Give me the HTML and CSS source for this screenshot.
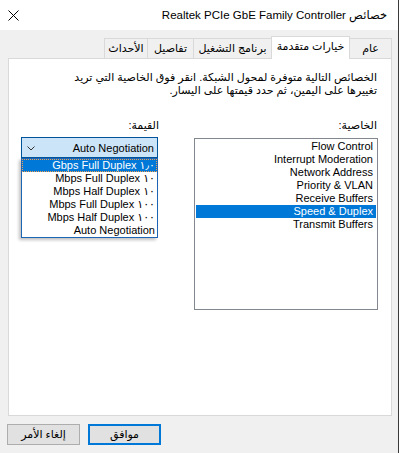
FILE: index.html
```html
<!DOCTYPE html>
<html lang="ar" dir="rtl">
<head>
<meta charset="utf-8">
<title>خصائص Realtek PCIe GbE Family Controller</title>
<link rel="stylesheet" href="styles.css">
</head>
<body>
<div class="window">
  <div class="titlebar">
    <span class="title">خصائص Realtek PCIe GbE Family Controller</span>
    <span class="close">
      <svg width="11" height="11" viewBox="0 0 11 11"><path d="M0.5 0.5 L10.5 10.5 M10.5 0.5 L0.5 10.5" stroke="#000" stroke-width="1" fill="none"/></svg>
    </span>
  </div>
  <div class="body">
    <div class="tabs">
      <div class="tab t-general">عام</div>
      <div class="tab active t-adv">خيارات متقدمة</div>
      <div class="tab t-driver">برنامج التشغيل</div>
      <div class="tab t-details">تفاصيل</div>
      <div class="tab t-events">الأحداث</div>
    </div>
    <div class="panel">
      <p class="desc">الخصائص التالية متوفرة لمحول الشبكة. انقر فوق الخاصية التي تريد<br>تغييرها على اليمين، ثم حدد قيمتها على اليسار.</p>
      <div class="columns">
        <div class="prop-col">
          <div class="label">الخاصية:</div>
          <div class="listbox">
            <div class="item">Flow Control</div>
            <div class="item">Interrupt Moderation</div>
            <div class="item">Network Address</div>
            <div class="item">Priority &amp; VLAN</div>
            <div class="item">Receive Buffers</div>
            <div class="item selected">Speed &amp; Duplex</div>
            <div class="item">Transmit Buffers</div>
          </div>
        </div>
        <div class="value-col">
          <div class="label">القيمة:</div>
          <div class="combo">
            <span class="combo-text">Auto Negotiation</span>
            <svg class="chev" width="8" height="5" viewBox="0 0 8 5"><path d="M0.5 0.5 L4 4 L7.5 0.5" stroke="#333" stroke-width="1" fill="none"/></svg>
            <div class="dropdown">
              <div class="opt focused">١٫٠ Gbps Full Duplex</div>
              <div class="opt">١٠ Mbps Full Duplex</div>
              <div class="opt">١٠ Mbps Half Duplex</div>
              <div class="opt">١٠٠ Mbps Full Duplex</div>
              <div class="opt">١٠٠ Mbps Half Duplex</div>
              <div class="opt">Auto Negotiation</div>
            </div>
          </div>
        </div>
      </div>
    </div>
    <div class="buttons">
      <button class="btn ok">موافق</button>
      <button class="btn">إلغاء الأمر</button>
    </div>
  </div>
</div>
</body>
</html>
```
FILE: styles.css
```css
* { box-sizing: border-box; }
html, body { margin: 0; padding: 0; }
body {
  background: #f0f0f0;
  font-family: "Liberation Sans", "DejaVu Sans", sans-serif;
  font-size: 11px;
  color: #000;
}
.window {
  width: 399px;
  height: 453px;
  background: #f0f0f0;
  border-right: 1px solid #3a3a3a;
  display: flex;
  flex-direction: column;
}
.titlebar {
  height: 30px;
  background: #fff;
  display: flex;
  align-items: center;
  justify-content: space-between;
  padding: 0 11px 0 8px;
}
.title {
  font-size: 11.5px;
  white-space: nowrap;
}
.close { display: flex; align-items: center; margin-top: 1px; }
.body {
  flex: 1;
  padding: 7px 6px 0 8px;
  display: flex;
  flex-direction: column;
}
.tabs {
  display: flex;
  align-items: flex-end;
  height: 21px;
  position: relative;
  z-index: 1;
}
.tab {
  height: 20px;
  border: 1px solid #d9d9d9;
  border-bottom: none;
  background: #f0f0f0;
  margin-right: -1px;
  display: flex;
  align-items: center;
  justify-content: center;
  white-space: nowrap;
  font-size: 11px;
}
.tab:first-child { margin-right: 0; }
.tab.active {
  height: 23px;
  margin-bottom: -1px;
  background: #fff;
  position: relative;
  z-index: 2;
  padding-bottom: 3px;
}
.t-general { width: 43px; }
.t-adv { width: 79px; }
.t-driver { width: 79px; }
.t-details { width: 47px; }
.t-events { width: 44px; }
.panel {
  height: 358px;
  background: #fff;
  border: 1px solid #d9d9d9;
  padding: 12px 13px 0 12px;
}
.desc {
  margin: 0 1px 0 0;
  line-height: 13px;
  white-space: nowrap;
}
.columns {
  display: flex;
  justify-content: space-between;
  margin-top: 22px;
}
.label { line-height: 13px; padding-right: 1px; }
.prop-col { width: 184px; }
.listbox {
  margin-top: 6px;
  height: 172px;
  border: 1px solid #828790;
  padding: 1px 1px;
}
.item {
  height: 13px;
  line-height: 13px;
  padding-right: 3px;
  white-space: nowrap;
}
.item.selected { background: #0078d7; color: #fff; }
.value-col { width: 139px; }
.combo {
  position: relative;
  margin: 5px 2px 0 0;
  width: 137px;
  height: 21px;
  background: #cce4f7;
  border: 1px solid #005499;
  display: flex;
  align-items: center;
  padding-right: 3px;
}
.combo-text { white-space: nowrap; font-size: 11px; }
.chev { position: absolute; left: 5px; top: 8px; }
.dropdown {
  position: absolute;
  top: 20px;
  left: -1px;
  width: 137px;
  background: #fff;
  border: 1px solid #1e64b4;
  box-shadow: -2px 2px 3px rgba(0,0,0,0.25);
  z-index: 5;
}
.opt {
  height: 13px;
  line-height: 13px;
  padding-right: 2px;
  white-space: nowrap;
  font-size: 11px;
}
.opt.focused {
  background: #0078d7;
  color: #fff;
  outline: 1px dotted #f5a050;
  outline-offset: -1px;
}
.buttons {
  display: flex;
  justify-content: flex-end;
  gap: 8px;
  margin-top: 8px;
  padding-left: 0;
  margin-left: -1px;
}
.btn {
  width: 73px;
  height: 21px;
  background: #e1e1e1;
  border: 1px solid #adadad;
  font-family: "Liberation Sans", "DejaVu Sans", sans-serif;
  font-size: 11px;
  padding: 0;
  color: #000;
}
.btn.ok { border: 2px solid #0078d7; }
```
